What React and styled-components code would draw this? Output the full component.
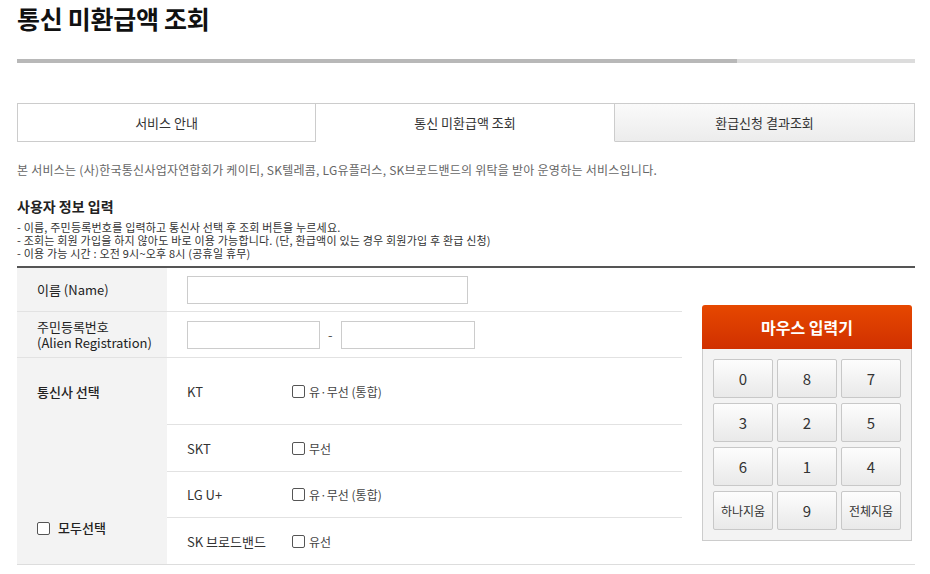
import styled, { createGlobalStyle } from "styled-components";

const GlobalStyle = createGlobalStyle`
    body {
        margin: 0;
        background: #fff;
        font-family: "Noto Sans CJK KR", "Noto Sans", sans-serif;
        color: #333;
    }
`;

const Page = styled.div`
    width: 898px;
    padding: 0 15px 0 17px;
`;

const Title = styled.h1`
    margin: 0;
    font-size: 25px;
    line-height: 36px;
    font-weight: 700;
    letter-spacing: -0.3px;
    color: #111;
`;

const Progress = styled.div`
    margin-top: 23px;
    height: 4px;
    background: #dcdcdc;
`;

const ProgressFill = styled.div`
    height: 100%;
    background: #b8b8b8;
`;

const Tabs = styled.div`
    margin-top: 40px;
    display: grid;
    grid-template-columns: 299px 299px 300px;
`;

const Tab = styled.div`
    height: 37px;
    display: flex;
    align-items: center;
    justify-content: center;
    font-size: 13px;
    color: #333;
    border: 1px solid #ccc;
    border-bottom: ${p => (p.$active ? "1px solid transparent" : "1px solid #ccc")};
    border-left: ${p => (p.$first ? "1px solid #ccc" : "none")};
    background: ${p => (p.$muted ? "linear-gradient(#fafafa, #ececec)" : "#fff")};
`;

const Notice = styled.p`
    margin: 19px 0 0;
    font-size: 12px;
    line-height: 18px;
    color: #666;
    letter-spacing: 0.25px;
`;

const SectionTitle = styled.h2`
    margin: 17px 0 0;
    font-size: 14px;
    line-height: 20px;
    font-weight: 700;
    color: #222;
`;

const Guide = styled.ul`
    list-style: none;
    margin: 5px 0 0;
    padding: 0;
    font-size: 11px;
    line-height: 13px;
    color: #333;
    letter-spacing: 0.2px;
`;

const FormWrap = styled.div`
    margin-top: 6px;
    display: flex;
    border-top: 2px solid #555;
    border-bottom: 1px solid #ddd;
`;

const Table = styled.div`
    width: 665px;
    display: flex;
    flex-direction: column;
`;

const Row = styled.div`
    display: flex;
    min-height: ${p => p.$h}px;
    border-bottom: ${p => (p.$last ? "none" : "1px solid #e2e2e2")};
`;

const Label = styled.div`
    width: 130px;
    flex: none;
    padding-left: 20px;
    background: #f3f3f3;
    display: flex;
    flex-direction: column;
    justify-content: center;
    font-size: 13px;
    line-height: 16px;
    color: #222;
`;

const SplitLabel = styled(Label)`
    justify-content: space-between;
    padding-top: 25px;
    padding-bottom: 27px;
    line-height: 18px;
    font-weight: 500;
`;

const Value = styled.div`
    flex: 1;
    padding-left: 20px;
    display: flex;
    align-items: center;
    gap: 8px;
`;

const TextInput = styled.input`
    box-sizing: border-box;
    width: ${p => p.$w}px;
    height: 28px;
    border: 1px solid #ccc;
    margin: 0;
    padding: 0 6px;
    outline: none;
`;

const Dash = styled.span`
    font-size: 13px;
    color: #555;
`;

const Carriers = styled.div`
    flex: 1;
    display: flex;
    flex-direction: column;
`;

const CarrierRow = styled.div`
    height: ${p => p.$h}px;
    padding-left: 20px;
    display: flex;
    align-items: center;
    border-bottom: ${p => (p.$last ? "none" : "1px solid #e2e2e2")};
    font-size: 13px;
    color: #333;
`;

const CarrierName = styled.span`
    width: 105px;
`;

const Check = styled.label`
    display: flex;
    align-items: center;
    gap: 4px;
    font-size: 12px;
    color: #444;
    font-weight: ${p => (p.$bold ? 500 : 400)};
    ${p => p.$bold && "font-size: 13px; color: #222; gap: 8px;"}
`;

const Box = styled.span`
    box-sizing: border-box;
    width: 13px;
    height: 13px;
    border: 1px solid #555;
    border-radius: 2px;
    background: #fff;
`;

const Aside = styled.div`
    flex: 1;
    padding: 37px 3px 0 20px;
`;

const Keypad = styled.div`
    width: 210px;
`;

const KeypadHead = styled.div`
    height: 44px;
    display: flex;
    align-items: center;
    justify-content: center;
    border-radius: 3px 3px 0 0;
    background: linear-gradient(#e64800, #d03000);
    color: #fff;
    font-size: 16px;
    font-weight: 700;
`;

const KeypadBody = styled.div`
    box-sizing: border-box;
    background: #f3f3f3;
    border: 1px solid #ccc;
    border-top: none;
    padding: 10px;
    display: grid;
    grid-template-columns: repeat(3, 60px);
    grid-auto-rows: 39px;
    column-gap: 4px;
    row-gap: 5px;
`;

const Key = styled.button`
    margin: 0;
    padding: 0;
    border: 1px solid #c8c8c8;
    border-radius: 2px;
    background: linear-gradient(#fdfdfd, #e9e9e9);
    font-family: inherit;
    font-size: ${p => (p.$small ? "12px" : "15px")};
    color: #333;
`;

const keys = ["0", "8", "7", "3", "2", "5", "6", "1", "4", "하나지움", "9", "전체지움"];

const carriers = [
    { name: "KT", option: "유·무선 (통합)", h: 66 },
    { name: "SKT", option: "무선", h: 46 },
    { name: "LG U+", option: "유·무선 (통합)", h: 45 },
    { name: "SK 브로드밴드", option: "유선", h: 46 },
];

export default function App() {
    return (
        <Page>
            <GlobalStyle />
            <Title>통신 미환급액 조회</Title>
            <Progress>
                <ProgressFill style={{ width: "80.2%" }} />
            </Progress>
            <Tabs>
                <Tab $first>서비스 안내</Tab>
                <Tab $active>통신 미환급액 조회</Tab>
                <Tab $muted>환급신청 결과조회</Tab>
            </Tabs>
            <Notice>
                본 서비스는 (사)한국통신사업자연합회가 케이티, SK텔레콤, LG유플러스, SK브로드밴드의 위탁을 받아 운영하는 서비스입니다.
            </Notice>
            <SectionTitle>사용자 정보 입력</SectionTitle>
            <Guide>
                <li>- 이름, 주민등록번호를 입력하고 통신사 선택 후 조회 버튼을 누르세요.</li>
                <li>- 조회는 회원 가입을 하지 않아도 바로 이용 가능합니다. (단, 환급액이 있는 경우 회원가입 후 환급 신청)</li>
                <li>- 이용 가능 시간 : 오전 9시~오후 8시 (공휴일 휴무)</li>
            </Guide>
            <FormWrap>
                <Table>
                    <Row $h={43}>
                        <Label>이름 (Name)</Label>
                        <Value>
                            <TextInput $w={281} />
                        </Value>
                    </Row>
                    <Row $h={45}>
                        <Label>
                            <span>주민등록번호</span>
                            <span>(Alien Registration)</span>
                        </Label>
                        <Value>
                            <TextInput $w={133} />
                            <Dash>-</Dash>
                            <TextInput $w={134} />
                        </Value>
                    </Row>
                    <Row $last>
                        <SplitLabel>
                            <span>통신사 선택</span>
                            <Check $bold>
                                <Box />
                                모두선택
                            </Check>
                        </SplitLabel>
                        <Carriers>
                            {carriers.map((c, i) => (
                                <CarrierRow key={c.name} $h={c.h} $last={i === carriers.length - 1}>
                                    <CarrierName>{c.name}</CarrierName>
                                    <Check>
                                        <Box />
                                        {c.option}
                                    </Check>
                                </CarrierRow>
                            ))}
                        </Carriers>
                    </Row>
                </Table>
                <Aside>
                    <Keypad>
                        <KeypadHead>마우스 입력기</KeypadHead>
                        <KeypadBody>
                            {keys.map(k => (
                                <Key key={k} $small={k.length > 1}>{k}</Key>
                            ))}
                        </KeypadBody>
                    </Keypad>
                </Aside>
            </FormWrap>
        </Page>
    );
}
